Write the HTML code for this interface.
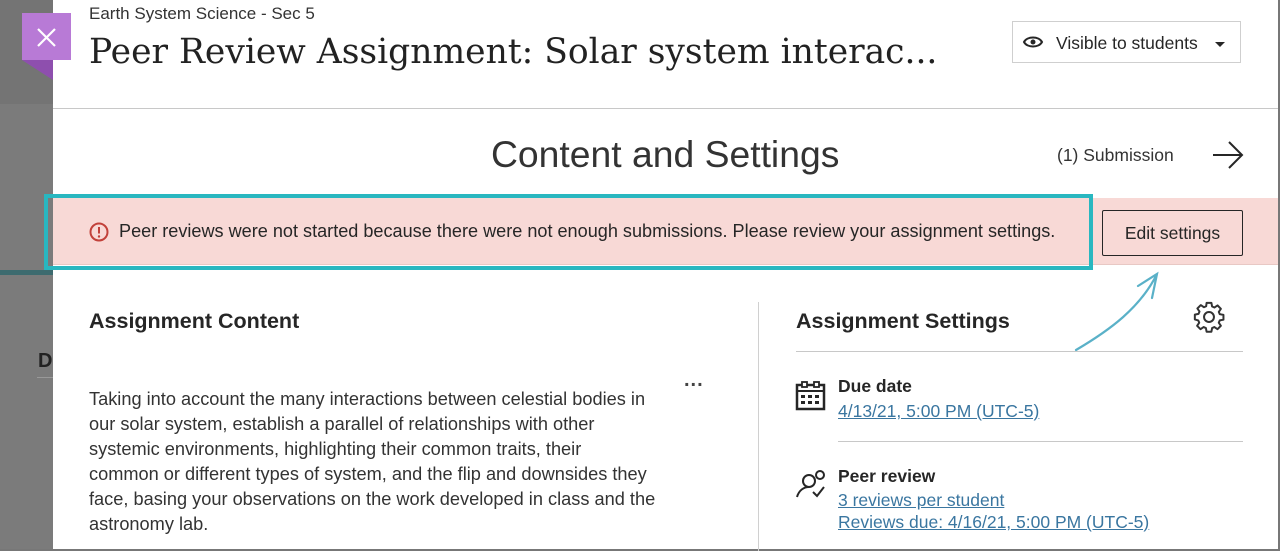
<!DOCTYPE html>
<html><head><style>
*{margin:0;padding:0;box-sizing:border-box}
body{width:1280px;height:551px;overflow:hidden;background:#7b7b7b;font-family:"Liberation Sans",sans-serif;color:#262626;position:relative}
.abs{position:absolute}
.panel{left:53px;top:0;width:1225px;height:551px;background:#fff}
a{color:#3a76a0;text-decoration:underline}
</style></head><body>
<div class="abs" style="left:0;top:0;width:53px;height:104px;background:#747474"></div>
<div class="abs" style="left:0;top:270px;width:53px;height:5px;background:#3d6b6f"></div>
<div class="abs" style="left:38px;top:350px;font-size:20px;font-weight:bold;color:#222">D</div>
<div class="abs" style="left:37px;top:377px;width:16px;height:1px;background:#999"></div>
<div class="panel abs"></div>
<div class="abs" style="left:1278px;top:0;width:2px;height:551px;background:#777"></div>
<div class="abs" style="left:0;top:549px;width:1280px;height:2px;background:#777"></div>
<div class="abs" style="left:22px;top:13px;width:49px;height:47px;background:#b87ad6"></div>
<div class="abs" style="left:22px;top:60px;width:0;height:0;border-top:20px solid #8e4fae;border-left:31px solid transparent"></div>
<svg class="abs" style="left:36px;top:27px" width="21" height="21"><path d="M2 2L19 19M19 2L2 19" stroke="#fff" stroke-width="2.2"/></svg>
<div class="abs" style="left:89px;top:4px;font-size:17px;color:#333">Earth System Science - Sec 5</div>
<div class="abs" style="left:89px;top:32px;font-family:'DejaVu Serif',serif;font-size:34.5px;color:#222;white-space:nowrap">Peer Review Assignment: Solar system interac...</div>
<div class="abs" style="left:1012px;top:21px;width:229px;height:42px;border:1px solid #cfcfcf"></div>
<svg class="abs" style="left:1022px;top:33px" width="22" height="18"><path d="M2 9C5 3 17 3 20 9C17 15 5 15 2 9Z" fill="none" stroke="#262626" stroke-width="2"/><circle cx="11" cy="9" r="2.5" fill="#262626"/></svg>
<div class="abs" style="left:1056px;top:33px;font-size:17.5px;color:#262626">Visible to students</div>
<div class="abs" style="left:1215px;top:42px;border-top:5px solid #262626;border-left:5px solid transparent;border-right:5px solid transparent"></div>
<div class="abs" style="left:53px;top:108px;width:1225px;height:1px;background:#c8c8c8"></div>
<div class="abs" style="left:491px;top:133px;font-size:37.3px;color:#333;font-weight:300">Content and Settings</div>
<div class="abs" style="left:1057px;top:145px;font-size:17.5px;color:#333">(1) Submission</div>
<svg class="abs" style="left:1211px;top:139px" width="34" height="32"><path d="M2 16H31M18 3L31 16L18 29" fill="none" stroke="#262626" stroke-width="2"/></svg>
<div class="abs" style="left:53px;top:198px;width:1225px;height:67px;background:#f8d9d6;border-bottom:1px solid #e8c8c4"></div>
<div class="abs" style="left:44px;top:194px;width:1049px;height:76px;border:4px solid #29b7c0"></div>
<svg class="abs" style="left:89px;top:222px" width="20" height="20"><circle cx="10" cy="10" r="8.5" fill="none" stroke="#c2413a" stroke-width="2"/><path d="M10 5V11.5" stroke="#c2413a" stroke-width="2"/><circle cx="10" cy="14.5" r="1.2" fill="#c2413a"/></svg>
<div class="abs" style="left:119px;top:221px;font-size:18.1px;color:#262626;white-space:nowrap">Peer reviews were not started because there were not enough submissions. Please review your assignment settings.</div>
<div class="abs" style="left:1102px;top:210px;width:141px;height:46px;border:1.5px solid #262626;border-radius:2px;font-size:17.5px;text-align:center;line-height:44px">Edit settings</div>
<svg class="abs" style="left:1070px;top:268px" width="100" height="85"><path d="M6 82C40 62 70 40 87 6M68 18L87 6L82 30" fill="none" stroke="#5ab1c8" stroke-width="2.2" stroke-linecap="round"/></svg>
<div class="abs" style="left:89px;top:309px;font-size:21.5px;font-weight:bold;color:#262626">Assignment Content</div>
<div class="abs" style="left:684px;top:375px;font-size:20px;font-weight:bold;letter-spacing:1px;color:#444;line-height:10px">...</div>
<div class="abs" style="left:89px;top:387px;white-space:nowrap;font-size:18.2px;line-height:25px;color:#333">Taking into account the many interactions between celestial bodies in<br>our solar system, establish a parallel of relationships with other<br>systemic environments, highlighting their common traits, their<br>common or different types of system, and the flip and downsides they<br>face, basing your observations on the work developed in class and the<br>astronomy lab.</div>
<div class="abs" style="left:758px;top:302px;width:1px;height:249px;background:#d0d0d0"></div>
<div class="abs" style="left:796px;top:309px;font-size:21.5px;font-weight:bold;color:#262626">Assignment Settings</div>
<svg class="abs" style="left:1192px;top:300px" width="34" height="34" viewBox="0 0 24 24"><path d="M12 8.5a3.5 3.5 0 1 0 0 7a3.5 3.5 0 1 0 0-7zM10.3 2h3.4l.5 2.6 1.6.7 2.2-1.5 2.4 2.4-1.5 2.2.7 1.6 2.6.5v3.4l-2.6.5-.7 1.6 1.5 2.2-2.4 2.4-2.2-1.5-1.6.7-.5 2.6h-3.4l-.5-2.6-1.6-.7-2.2 1.5-2.4-2.4 1.5-2.2-.7-1.6L2 13.7v-3.4l2.6-.5.7-1.6-1.5-2.2 2.4-2.4 2.2 1.5 1.6-.7z" fill="none" stroke="#333" stroke-width="1.4" stroke-linejoin="round"/></svg>
<div class="abs" style="left:796px;top:351px;width:447px;height:1px;background:#c8c8c8"></div>
<svg class="abs" style="left:795px;top:380px" width="32" height="31"><rect x="2" y="5" width="27" height="24" fill="none" stroke="#262626" stroke-width="2.5"/><line x1="2" y1="11" x2="29" y2="11" stroke="#262626" stroke-width="2"/><rect x="7" y="2" width="5" height="5" fill="#fff" stroke="#262626" stroke-width="1.8"/><rect x="19" y="2" width="5" height="5" fill="#fff" stroke="#262626" stroke-width="1.8"/><g fill="#262626"><rect x="6" y="15" width="4" height="3"/><rect x="13" y="15" width="4" height="3"/><rect x="20" y="15" width="4" height="3"/><rect x="6" y="21" width="4" height="3"/><rect x="13" y="21" width="4" height="3"/><rect x="20" y="21" width="4" height="3"/></g></svg>
<div class="abs" style="left:838px;top:376px;font-size:17.5px;font-weight:bold">Due date</div>
<div class="abs" style="left:838px;top:401px;font-size:17.5px"><a>4/13/21, 5:00 PM (UTC-5)</a></div>
<div class="abs" style="left:838px;top:441px;width:405px;height:1px;background:#c8c8c8"></div>
<svg class="abs" style="left:795px;top:468px" width="34" height="32"><circle cx="14" cy="13" r="6" fill="none" stroke="#262626" stroke-width="2"/><circle cx="25" cy="7" r="4" fill="none" stroke="#262626" stroke-width="2"/><path d="M2 29C4 22 9 19 14 19" fill="none" stroke="#262626" stroke-width="2"/><path d="M18 24L22 28L29 19" fill="none" stroke="#262626" stroke-width="2"/></svg>
<div class="abs" style="left:838px;top:466px;font-size:17.5px;font-weight:bold">Peer review</div>
<div class="abs" style="left:838px;top:489px;font-size:17.5px;line-height:22px"><a>3 reviews per student</a><br><a>Reviews due: 4/16/21, 5:00 PM (UTC-5)</a></div>
</body></html>
